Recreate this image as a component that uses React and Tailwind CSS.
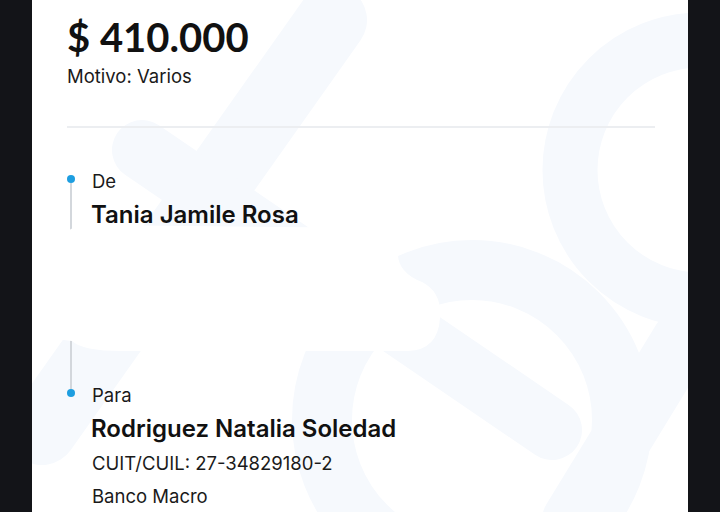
import React from "react";

function Watermark() {
  return (
    <svg
      className="absolute inset-0 h-full w-full"
      viewBox="0 0 656 512"
      preserveAspectRatio="none"
      fill="none"
    >
      <g stroke="#f6f9fd" strokeLinecap="round">
        <path d="M10 430 L300 20" strokeWidth="70" />
        <path d="M110 150 L520 430" strokeWidth="60" />
        <circle cx="668" cy="170" r="130" strokeWidth="55" />
        <circle cx="440" cy="420" r="150" strokeWidth="60" />
        <path d="M540 520 L650 340" strokeWidth="60" />
      </g>
    </svg>
  );
}

function Blob() {
  return (
    <svg
      className="absolute left-0 top-0 h-[512px] w-[656px] pointer-events-none"
      viewBox="0 0 656 512"
    >
      <path
        fill="#ffffff"
        d="M34 236 Q36 225 60 225 L350 228 Q368 230 366 250 Q364 272 390 282 Q410 292 408 318 Q406 350 376 351 L90 351 Q50 351 40 341 Q10 340 11 315 Q12 292 28 286 Q32 270 30 250 Z"
      />
    </svg>
  );
}

function Dot() {
  return <span className="block h-2 w-2 shrink-0 rounded-full bg-[#1e9ee0]" />;
}

export default function App() {
  return (
    <div className="flex h-[512px] w-[720px] overflow-hidden bg-[#131418] font-['Inter',sans-serif] text-[#1a1a1a]">
      <div className="w-8 shrink-0" />
      <div className="relative flex-1 overflow-hidden bg-white">
        <Watermark />
        <div className="relative pl-[35px] pr-[33px] pt-[17px]">
          <div className="font-['Lato',sans-serif] text-[40px] font-bold leading-10 text-[#111]">$ 410.000</div>
          <div className="mt-[7px] text-[18.5px] leading-6">Motivo: Varios</div>
          <div className="mt-[38px] h-[2px] bg-[#eceef1]" />

          <div className="mt-[41px] flex gap-4">
            <div className="flex w-2 flex-col items-center pt-[6px]">
              <Dot />
              <span className="block h-[206px] w-[2px] bg-[#d3d7dc]" />
              <Dot />
            </div>
            <div className="flex flex-col">
              <div className="pl-[1px] text-[18.5px] leading-6">De</div>
              <div className="mt-[7px] text-[24px] font-semibold leading-[30px] text-[#111]">
                Tania Jamile Rosa
              </div>
              <div className="mt-[153px] pl-[1px] text-[18.5px] leading-6">Para</div>
              <div className="mt-[7px] text-[24px] font-semibold leading-[30px] text-[#111]">
                Rodriguez Natalia Soledad
              </div>
              <div className="mt-[7px] pl-[1px] text-[18.5px] leading-6">CUIT/CUIL: 27-34829180-2</div>
              <div className="mt-[9px] pl-[1px] text-[18.5px] leading-6">Banco Macro</div>
            </div>
          </div>
        </div>
        <Blob />
      </div>
      <div className="w-8 shrink-0" />
    </div>
  );
}
